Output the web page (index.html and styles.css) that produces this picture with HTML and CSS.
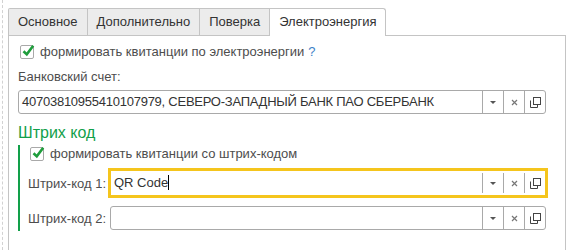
FILE: index.html
```html
<!DOCTYPE html>
<html lang="ru">
<head>
  <meta charset="UTF-8" />
  <title>Настройки квитанций</title>
  <link rel="stylesheet" href="styles.css">
</head>
<body>
  <div class="frame">
    <div class="tabs">
      <div class="tab">Основное</div>
      <div class="tab">Дополнительно</div>
      <div class="tab">Поверка</div>
      <div class="tab active">Электроэнергия</div>
    </div>

    <div class="panel">
      <label class="check-row">
        <span class="checkbox">
          <svg width="14" height="14" viewBox="0 0 14 14"><path d="M2.5 7.2 L5.8 10.4 L12.2 1.8" fill="none" stroke="#1f9d3c" stroke-width="2.6"/></svg>
        </span>
        формировать квитанции по электроэнергии
        <span class="help">?</span>
      </label>

      <div class="caption">Банковский счет:</div>
      <div class="field wide">
        <div class="value narrow">40703810955410107979, СЕВЕРО-ЗАПАДНЫЙ БАНК ПАО СБЕРБАНК</div>
        <span class="fbtn"><svg width="6" height="3"><path d="M0 0h6L3 3z" fill="#555"/></svg></span>
        <span class="fbtn"><svg width="7" height="7"><path d="M1 1L6 6M6 1L1 6" stroke="#777" stroke-width="1.2"/></svg></span>
        <span class="fbtn"><svg width="11" height="11"><rect x="3.5" y="0.5" width="7" height="7" fill="#fff" stroke="#444"/><path d="M0.5 3.5V10.5H7.5V8" fill="none" stroke="#444"/></svg></span>
      </div>

      <div class="group-title">Штрих код</div>
      <div class="group">
        <label class="check-row">
          <span class="checkbox">
            <svg width="14" height="14" viewBox="0 0 14 14"><path d="M2.5 7.2 L5.8 10.4 L12.2 1.8" fill="none" stroke="#1f9d3c" stroke-width="2.6"/></svg>
          </span>
          формировать квитанции со штрих-кодом
        </label>

        <div class="form-row first">
          <span class="label">Штрих-код 1:</span>
          <div class="field focus">
            <div class="value">QR Code<span class="caret"></span></div>
            <span class="fbtn"><svg width="6" height="3"><path d="M0 0h6L3 3z" fill="#555"/></svg></span>
            <span class="fbtn"><svg width="7" height="7"><path d="M1 1L6 6M6 1L1 6" stroke="#777" stroke-width="1.2"/></svg></span>
            <span class="fbtn"><svg width="11" height="11"><rect x="3.5" y="0.5" width="7" height="7" fill="#fff" stroke="#444"/><path d="M0.5 3.5V10.5H7.5V8" fill="none" stroke="#444"/></svg></span>
          </div>
        </div>

        <div class="form-row">
          <span class="label">Штрих-код 2:</span>
          <div class="field">
            <div class="value"></div>
            <span class="fbtn"><svg width="6" height="3"><path d="M0 0h6L3 3z" fill="#555"/></svg></span>
            <span class="fbtn"><svg width="7" height="7"><path d="M1 1L6 6M6 1L1 6" stroke="#777" stroke-width="1.2"/></svg></span>
            <span class="fbtn"><svg width="11" height="11"><rect x="3.5" y="0.5" width="7" height="7" fill="#fff" stroke="#444"/><path d="M0.5 3.5V10.5H7.5V8" fill="none" stroke="#444"/></svg></span>
          </div>
        </div>
      </div>
    </div>
  </div>
</body>
</html>
```

FILE: styles.css
```css
html, body {
  overflow: hidden;
}

body {
  margin: 0;
  font-family: "Liberation Sans", Arial, sans-serif;
  font-size: 13px;
  color: #4d4d4d;
  background: #fff;
}

.frame {
  margin-left: 2px;
  padding: 8px 0 0 5px;
  border-left: 1px dashed #d2d2d2;
  height: 250px;
  box-sizing: border-box;
}

.tabs {
  display: flex;
  height: 27px;
}

.tab {
  padding: 0 9px;
  line-height: 26px;
  background: #ececec;
  color: #333;
  border: 1px solid #c4c4c4;
  border-bottom: none;
  margin-right: -1px;
}

.tab:first-child {
  border-top-left-radius: 2px;
}

.tab.active {
  background: #fff;
  height: 27px;
  position: relative;
  z-index: 1;
  border-top-right-radius: 3px;
}

.panel {
  width: 558px;
  box-sizing: border-box;
  border: 1px solid #c4c4c4;
  border-bottom: none;
  padding: 8px 18px 0 9px;
  height: 215px;
}

.check-row {
  display: flex;
  align-items: center;
  height: 16px;
  line-height: 16px;
}

.checkbox {
  width: 14px;
  height: 14px;
  box-sizing: border-box;
  border: 1px solid #a9a9a9;
  border-radius: 2px;
  margin: 0 6px 0 2px;
  position: relative;
}

.checkbox svg {
  position: absolute;
  left: 0;
  top: -2px;
}

.help {
  color: #3c82c8;
  margin-left: 4px;
}

.caption {
  margin-top: 9px;
  line-height: 16px;
}

.field {
  display: flex;
  height: 24px;
  box-sizing: border-box;
  border: 1px solid #a9a9a9;
  border-radius: 3px;
  background: #fff;
  flex: 1;
}

.field.wide {
  margin-top: 5px;
  width: 528px;
}

.field.focus {
  height: 26px;
  border-color: #f5c51d;
  box-shadow: 0 0 0 2px #f5c51d;
  border-radius: 0;
}

.value {
  flex: 1;
  padding-left: 3px;
  line-height: 22px;
  color: #333;
  white-space: nowrap;
  overflow: hidden;
}

.value.narrow {
  letter-spacing: -0.25px;
}

.field.focus .value {
  line-height: 24px;
}

.caret {
  display: inline-block;
  width: 1px;
  height: 15px;
  background: #000;
  vertical-align: -3px;
}

.fbtn {
  width: 20px;
  border-left: 1px solid #a9a9a9;
  display: flex;
  align-items: center;
  justify-content: center;
}

.field.focus .fbtn {
  margin: 2px 0;
}

.group-title {
  margin-top: 9px;
  font-size: 16px;
  line-height: 20px;
  color: #12a04a;
}

.group {
  margin-top: 2px;
  border-left: 2px solid #12a04a;
  padding: 1px 0 1px 8px;
  width: 518px;
}

.form-row {
  display: flex;
  align-items: center;
  margin-top: 10px;
}

.form-row.first {
  margin-top: 8px;
}

.label {
  width: 82px;
  flex-shrink: 0;
}
```
